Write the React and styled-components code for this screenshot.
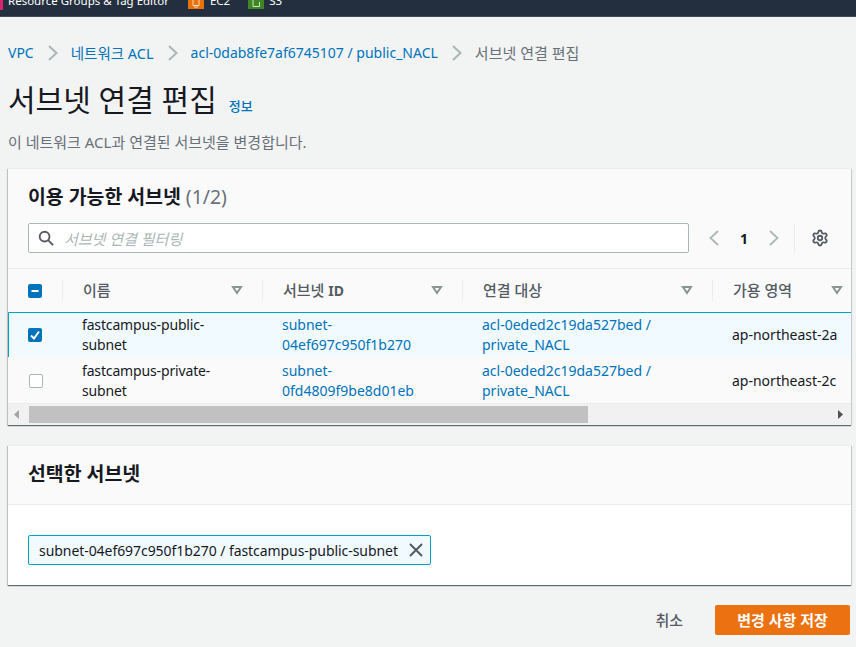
import React from 'react'
import styled, { createGlobalStyle } from 'styled-components'
import { Settings } from 'lucide-react'

const Global = createGlobalStyle`
  html, body {
    margin: 0;
    height: 100%;
    overflow: hidden;
    background: #f2f3f3;
    font-family: "Noto Sans", "Noto Sans CJK KR", sans-serif;
    font-size: 14px;
    color: #16191f;
  }
  * { box-sizing: border-box; }
`

const TopBar = styled.header`
  height: 17px;
  background: #232f3e;
  border-bottom: 1px solid #414b5a;
  display: flex;
  align-items: flex-end;
  overflow: hidden;
  color: #fff;
  font-size: 11.5px;
  line-height: 18px;
  padding-bottom: 6px;
  white-space: nowrap;
`

const PinkEdge = styled.span`
  width: 3px;
  height: 18px;
  flex: none;
  background: #d6246e;
  margin-right: 5px;
`

const ServiceIcon = styled.svg`
  width: 16px;
  height: 9px;
  flex: none;
  align-self: flex-start;
  margin: 0 ${p => p.$after}px 0 ${p => p.$gap}px;
`

const Main = styled.main`
  padding: 0 5px 0 8px;
`

const Crumbs = styled.nav`
  display: flex;
  align-items: center;
  height: 20px;
  margin-top: 26px;
  line-height: 20px;
`

const Crumb = styled.a`
  color: ${p => (p.$current ? '#687078' : '#0073bb')};
  font-size: ${p => p.$size || 14}px;
`

const CrumbSep = styled.svg`
  width: 12px;
  height: 16px;
  margin: 0 12px 0 13px;
  fill: none;
  stroke: #aab7b8;
  stroke-width: 2;
`

const TitleRow = styled.div`
  display: flex;
  align-items: baseline;
  margin-top: 17px;
  height: 40px;
`

const Title = styled.h1`
  margin: 0;
  font-weight: 400;
  font-size: 30px;
  line-height: 40px;
`

const InfoLink = styled.a`
  margin-left: 12px;
  color: #0073bb;
  font-size: 13px;
  font-weight: 500;
`

const Description = styled.p`
  margin: 12px 0 0;
  color: #687078;
  font-size: 15px;
  line-height: 20px;
`

const Card = styled.section`
  background: #fff;
  box-shadow: 0 1px 1px 0 rgba(0, 28, 36, 0.5), 1px 1px 1px 0 rgba(0, 28, 36, 0.1), -1px 1px 1px 0 rgba(0, 28, 36, 0.15);
  border-top: 1px solid #eaeded;
  overflow: hidden;
`

const FirstCard = styled(Card)`
  margin-top: 16px;
  height: 257px;
`

const SecondCard = styled(Card)`
  margin-top: 20px;
  height: 140px;
`

const CardHead = styled.div`
  background: #fafafa;
  padding: 16px 20px 0;
  height: ${p => p.$h}px;
  border-bottom: 1px solid #eaeded;
`

const CardTitle = styled.h2`
  margin: 0;
  font-size: 19.4px;
  line-height: 24px;
  font-weight: 700;
  color: #16191f;
`

const Count = styled.span`
  font-weight: 400;
  color: #687078;
`

const Tools = styled.div`
  display: flex;
  align-items: center;
  margin-top: 14px;
  height: 30px;
`

const Filter = styled.div`
  width: 661px;
  height: 30px;
  flex: none;
  background: #fff;
  border: 1px solid #aab7b8;
  border-radius: 2px;
  display: flex;
  align-items: center;
  padding-left: 9px;
  gap: 10px;
`

const Placeholder = styled.span`
  color: #aab7b8;
  font-style: italic;
  font-size: 15px;
`

const Pager = styled.div`
  display: flex;
  align-items: center;
  margin-left: 19px;
`

const PagerArrow = styled.svg`
  width: 12px;
  height: 16px;
  fill: none;
  stroke: #aab7b8;
  stroke-width: 1.8;
`

const PageNum = styled.span`
  width: 48px;
  text-align: center;
  font-weight: 700;
  font-size: 14px;
`

const ToolSep = styled.span`
  width: 1px;
  height: 30px;
  background: #eaeded;
  margin: 0 16px 0 14px;
`

const Row = styled.div`
  display: grid;
  grid-template-columns: 54px 200px 200px 250px 150px;
  align-items: center;
`

const HeadRow = styled(Row)`
  height: 43px;
  background: #fafafa;
`

const HeadCell = styled.div`
  height: 21px;
  display: flex;
  align-items: center;
  justify-content: space-between;
  padding: 0 19px 2px 20px;
  border-left: 1px solid #eaeded;
  color: #545b64;
  font-size: 15px;
  font-weight: 500;
  white-space: nowrap;
`

const HeadLatin = styled.b`
  font-size: 14px;
  font-weight: 700;
`

const BodyRow = styled(Row)`
  height: ${p => p.$h}px;
  background: ${p => (p.$selected ? '#f1faff' : '#fafafa')};
  border-top: 1px solid ${p => (p.$selected ? '#00a1c9' : 'transparent')};
  border-bottom: 1px solid ${p => (p.$selected ? '#00a1c9' : '#eaeded')};
  border-left: 1px solid ${p => (p.$selected ? '#00a1c9' : 'transparent')};
  margin-top: ${p => (p.$selected ? 0 : -1)}px;
`

const CheckCell = styled.div`
  padding-left: ${p => p.$inset}px;
  display: flex;
  align-items: center;
`

const Box = styled.span`
  width: 14px;
  height: 14px;
  display: flex;
  align-items: center;
  justify-content: center;
  border-radius: 2px;
  background: ${p => (p.$on ? '#0073bb' : '#fff')};
  border: ${p => (p.$on ? 'none' : '1px solid #aab7b8')};
`

const Cell = styled.div`
  padding: 0 30px 0 19px;
  line-height: 20px;
  color: ${p => (p.$link ? '#0073bb' : '#16191f')};
  white-space: ${p => (p.$nowrap ? 'nowrap' : 'normal')};
`

const NameCell = styled(Cell)`
  letter-spacing: -0.15px;
`

const Scrollbar = styled.div`
  height: 22px;
  background: #f1f1f1;
  display: flex;
  align-items: center;
  justify-content: space-between;
  padding: 0 8px 1px 6px;
  position: relative;
`

const ScrollThumb = styled.div`
  position: absolute;
  left: 21px;
  top: 2px;
  width: 559px;
  height: 17px;
  background: #c1c1c1;
`

const Token = styled.div`
  display: flex;
  align-items: center;
  justify-content: space-between;
  margin: 30px 0 0 20px;
  width: 403px;
  height: 30px;
  padding: 0 7px 0 10px;
  background: #f1faff;
  border: 1px solid #00a1c9;
  border-radius: 2px;
  letter-spacing: -0.06px;
  white-space: nowrap;
`

const Actions = styled.div`
  display: flex;
  justify-content: flex-end;
  align-items: center;
  margin-top: 20px;
  padding-right: 1px;
`

const CancelButton = styled.button`
  border: 0;
  background: none;
  padding: 0 0 2px;
  font: inherit;
  font-size: 15px;
  font-weight: 500;
  color: #545b64;
  margin-right: 32px;
`

const SaveButton = styled.button`
  width: 135px;
  height: 30px;
  border: 0;
  border-radius: 2px;
  padding: 0 0 2px;
  background: #ec7211;
  color: #fff;
  font: inherit;
  font-size: 15px;
  font-weight: 700;
`

const Triangle = () => (
  <svg width="12" height="10" viewBox="0 0 12 10" fill="none" stroke="#879596" strokeWidth="2">
    <path d="M2 2h8L6 8z" />
  </svg>
)

const Chevron = ({ as: Comp, left, ...rest }) => (
  <Comp viewBox="0 0 12 16" {...rest}>
    <path d={left ? 'M10 1 2.500 8l7.500 7' : 'M2 1l7.500 7L2 15'} />
  </Comp>
)

const rows = [
  {
    name: 'fastcampus-public-subnet',
    id: 'subnet-04ef697c950f1b270',
    acl: 'acl-0eded2c19da527bed / private_NACL',
    az: 'ap-northeast-2a',
    selected: true,
    h: 46,
  },
  {
    name: 'fastcampus-private-subnet',
    id: 'subnet-0fd4809f9be8d01eb',
    acl: 'acl-0eded2c19da527bed / private_NACL',
    az: 'ap-northeast-2c',
    selected: false,
    h: 47,
  },
]

export default function App() {
  return (
    <>
      <Global />
      <TopBar>
        <PinkEdge />
        Resource Groups &amp; Tag Editor
        <ServiceIcon $gap={19} $after={6} viewBox="0 0 16 9">
          <rect width="16" height="9" fill="#e8720c" />
          <path d="M5 0v5.500h6V0M7 5.500V8M9 5.500V8" fill="none" stroke="#f8d9b8" />
        </ServiceIcon>
        EC2
        <ServiceIcon $gap={18} $after={5} viewBox="0 0 16 9">
          <rect width="16" height="9" fill="#3f8624" />
          <path d="M5 0v6.500h6.500V2" fill="none" stroke="#cfe5c4" />
        </ServiceIcon>
        S3
      </TopBar>
      <Main>
        <Crumbs>
          <Crumb>VPC</Crumb>
          <Chevron as={CrumbSep} />
          <Crumb $size={14.5}>네트워크 ACL</Crumb>
          <Chevron as={CrumbSep} />
          <Crumb>acl-0dab8fe7af6745107 / public_NACL</Crumb>
          <Chevron as={CrumbSep} />
          <Crumb $current $size={15}>서브넷 연결 편집</Crumb>
        </Crumbs>
        <TitleRow>
          <Title>서브넷 연결 편집</Title>
          <InfoLink>정보</InfoLink>
        </TitleRow>
        <Description>이 네트워크 ACL과 연결된 서브넷을 변경합니다.</Description>

        <FirstCard>
          <CardHead $h={100}>
            <CardTitle>
              이용 가능한 서브넷 <Count>(1/2)</Count>
            </CardTitle>
            <Tools>
              <Filter>
                <svg width="16" height="16" viewBox="0 0 17 17" fill="none" stroke="#545b64" strokeWidth="2">
                  <circle cx="7" cy="7" r="5.2" />
                  <path d="m11 11 5 5" />
                </svg>
                <Placeholder>서브넷 연결 필터링</Placeholder>
              </Filter>
              <Pager>
                <Chevron as={PagerArrow} left />
                <PageNum>1</PageNum>
                <Chevron as={PagerArrow} />
              </Pager>
              <ToolSep />
              <Settings size={18} color="#545b64" strokeWidth={2.4} />
            </Tools>
          </CardHead>
          <HeadRow>
            <CheckCell $inset={20}>
              <Box $on>
                <svg width="10" height="10" viewBox="0 0 10 10">
                  <path d="M1.500 5h7" stroke="#fff" strokeWidth="2" />
                </svg>
              </Box>
            </CheckCell>
            <HeadCell>이름<Triangle /></HeadCell>
            <HeadCell><span>서브넷 <HeadLatin>ID</HeadLatin></span><Triangle /></HeadCell>
            <HeadCell>연결 대상<Triangle /></HeadCell>
            <HeadCell>가용 영역<Triangle /></HeadCell>
          </HeadRow>
          {rows.map(r => (
            <BodyRow key={r.id} $selected={r.selected} $h={r.h}>
              <CheckCell $inset={r.selected ? 19 : 20}>
                <Box $on={r.selected}>
                  {r.selected && (
                    <svg width="12" height="12" viewBox="0 0 12 12" fill="none">
                      <path d="m2 6.500 3 3 5-7" stroke="#fff" strokeWidth="2" />
                    </svg>
                  )}
                </Box>
              </CheckCell>
              <NameCell>{r.name}</NameCell>
              <Cell $link>{r.id}</Cell>
              <Cell $link>{r.acl}</Cell>
              <Cell $nowrap>{r.az}</Cell>
            </BodyRow>
          ))}
          <Scrollbar>
            <svg width="6" height="9" viewBox="0 0 6 9"><path d="M5 0v9L0 4.500z" fill="#a3a3a3" /></svg>
            <ScrollThumb />
            <svg width="6" height="9" viewBox="0 0 6 9"><path d="M1 0v9l5-4.500z" fill="#505050" /></svg>
          </Scrollbar>
        </FirstCard>

        <SecondCard>
          <CardHead $h={59}>
            <CardTitle>선택한 서브넷</CardTitle>
          </CardHead>
          <Token>
            subnet-04ef697c950f1b270 / fastcampus-public-subnet
            <svg width="14" height="14" viewBox="0 0 14 14" stroke="#545b64" strokeWidth="2">
              <path d="m1 1 12 12M13 1 1 13" />
            </svg>
          </Token>
        </SecondCard>

        <Actions>
          <CancelButton>취소</CancelButton>
          <SaveButton>변경 사항 저장</SaveButton>
        </Actions>
      </Main>
    </>
  )
}
